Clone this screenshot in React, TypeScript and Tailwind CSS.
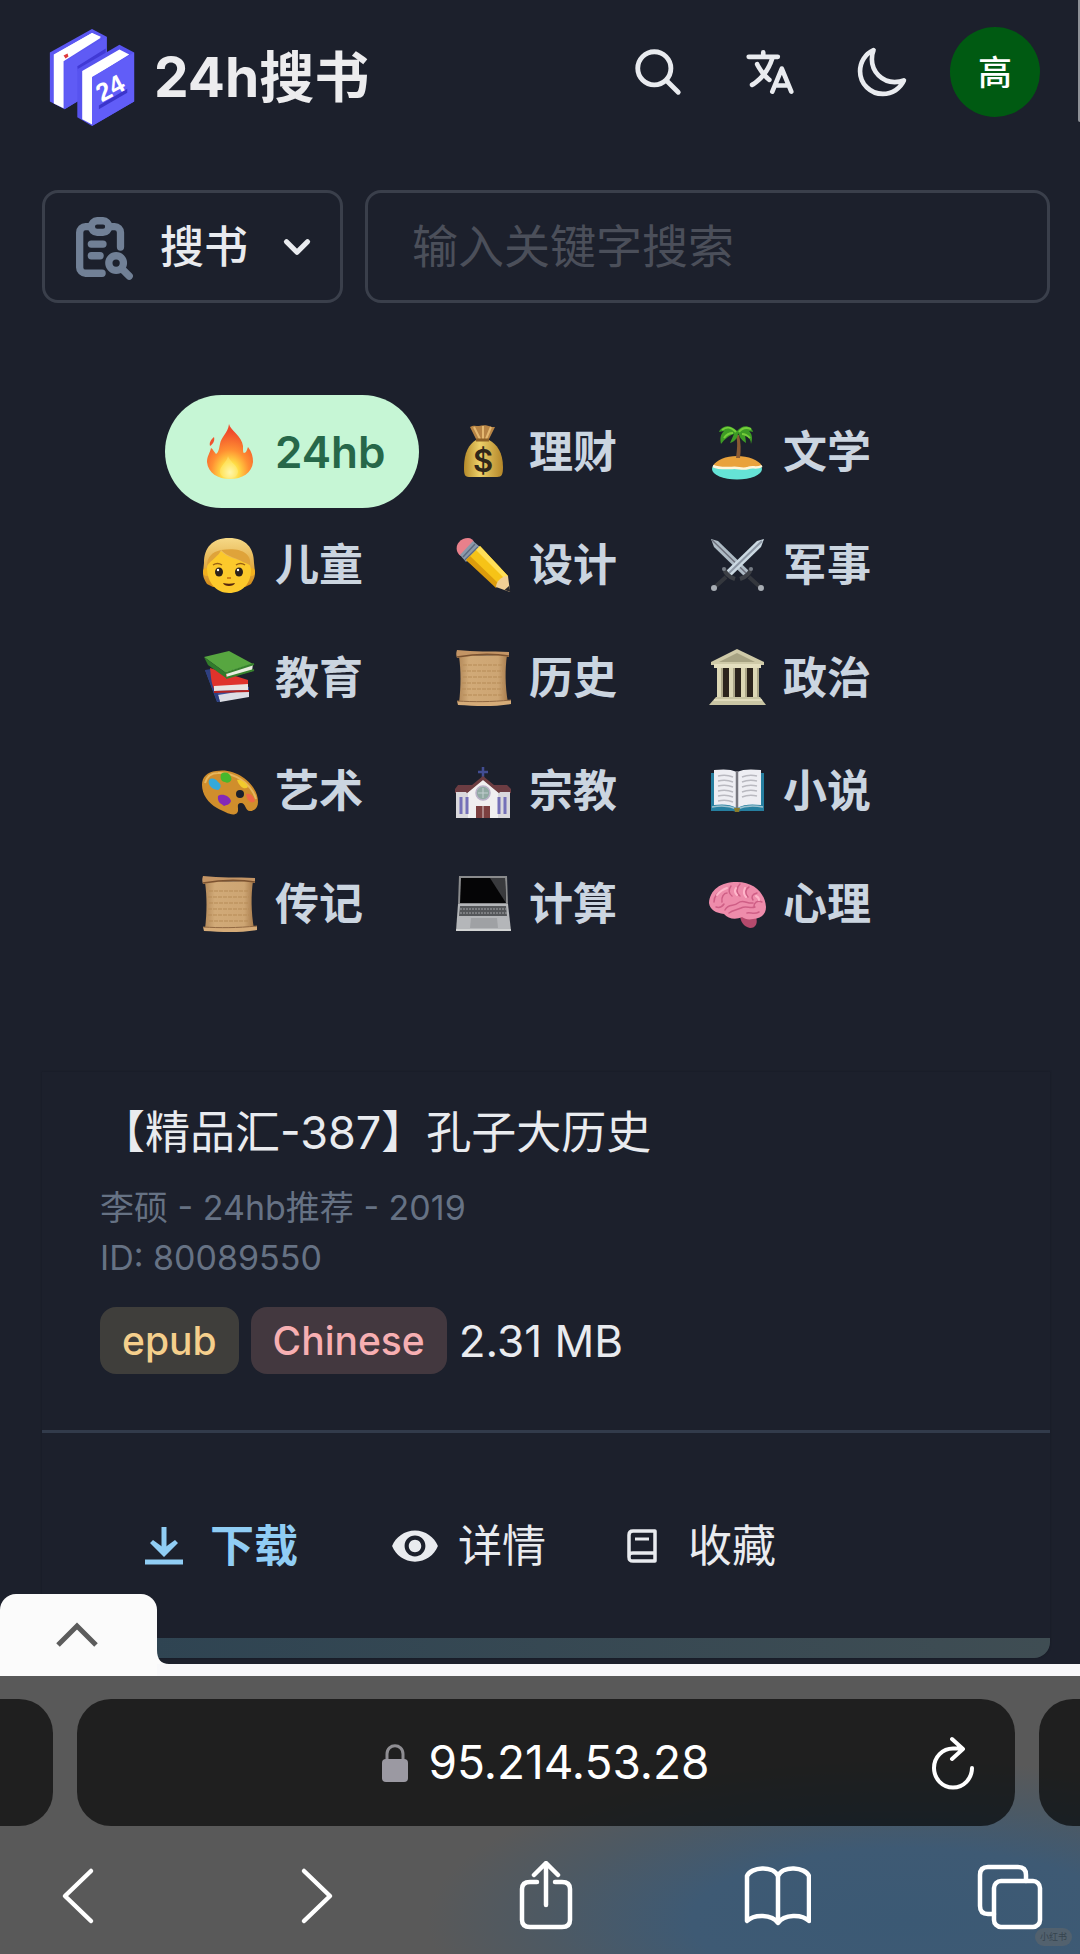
import React, { useState } from 'react';
import { IoLanguage, IoMoonOutline, IoSearchOutline } from 'react-icons/io5';
import { MdRemoveRedEye } from 'react-icons/md';
import { TbReportSearch } from 'react-icons/tb';
import { ChevronDown } from 'lucide-react';

interface Category {
  name: string;
  icon: React.ReactNode;
}

interface Book {
  title: string;
  meta: string;
  id: string;
  extension: string;
  language: string;
  size: string;
}

const Emoji = ({ children }: { children: React.ReactNode }) => (
  <svg viewBox="0 0 58 58" className="h-[58px] w-[58px] shrink-0" aria-hidden="true">
    {children}
  </svg>
);

const Fire = () => (
  <Emoji>
    <defs>
      <radialGradient id="fire" cx="0.5" cy="0.88" r="0.75">
        <stop offset="0" stopColor="#fffbc0" />
        <stop offset="0.25" stopColor="#ffdd45" />
        <stop offset="0.55" stopColor="#ff8f32" />
        <stop offset="1" stopColor="#ef4b2b" />
      </radialGradient>
    </defs>
    <path d="M28 1c1 6 13 12 14 22 0 4 0 7 1 7 2 0 3-3 4-6 4 5 5 10 5 15-1 11-11 17-23 17S7 50 6 39c0-6 3-9 4-14 2 1 3 4 5 6 3-2 3-6 4-10 1-7 8-11 9-20z" fill="url(#fire)" />
    <path d="M13 14c1 4-1 7-4 9-1-4 1-6 4-9z" fill="#f0522d" />
    <path d="M27 33c1 5 9 9 10 15 0 5-4 7-9 7s-9-2-9-7 7-9 8-15z" fill="#fff08a" opacity="0.4" />
  </Emoji>
);

const MoneyBag = () => (
  <Emoji>
    <defs>
      <linearGradient id="bag" x1="0" x2="1">
        <stop offset="0" stopColor="#b58a2a" />
        <stop offset="0.4" stopColor="#ecd069" />
        <stop offset="1" stopColor="#b48629" />
      </linearGradient>
    </defs>
    <path d="M15 4c3-2 6-1 9-1 4-1 8-1 13 1l3 0-7 14H22z" fill="#b78445" />
    <path d="M19 4l6 12M28 3v13M36 4l-5 12" stroke="#e4b870" strokeWidth="2" fill="none" />
    <path d="M21 17h13c8 4 14 13 14 27 0 7-1 10-6 10H14c-5 0-5-4-5-10 0-14 5-23 12-27z" fill="url(#bag)" />
    <path d="M21 17h13" stroke="#8d6026" strokeWidth="3" />
    <text x="28" y="49" textAnchor="middle" fontSize="31" fontWeight="600" fill="#30271a">$</text>
  </Emoji>
);

const Island = () => (
  <Emoji>
    <ellipse cx="28" cy="46" rx="25" ry="10.500" fill="#65e3d6" />
    <path d="M4 43c3-6 13-10 24-10s22 4 25 10c-6 3-9 0-14 2-6 2-10-1-16 0-6 0-12 1-19-2z" fill="#e9a23c" />
    <path d="M4 43c7 3 13 2 19 2 6-1 10 2 16 0 5-2 8 1 14-2" stroke="#fff5d8" strokeWidth="2.500" fill="none" />
    <path d="M30 12c2 8 2 15 1 23h-4c1-8 2-15 0-23z" fill="#8a5a33" />
    <path d="M28 8c-7-8-16-5-18 1l5-1c-4 4-4 8-3 13 4-5 7-8 13-10l-4 9c6-2 8-6 8-10 2 4 3 7 8 10l-1-9c4 3 6 6 6 10 2-6 1-10-2-13l4 1c-1-6-10-9-16-1z" fill="#3d9b25" />
    <path d="M13 7c5-4 9-3 14 2M30 9c3-4 7-5 12-3M15 15c2-3 5-5 9-5M33 11c3 0 6 2 8 4" stroke="#75cd3b" strokeWidth="2" fill="none" />
  </Emoji>
);

const Child = () => (
  <Emoji>
    <defs>
      <linearGradient id="hair" x1="0" x2="0" y1="0" y2="1">
        <stop offset="0" stopColor="#f6d987" />
        <stop offset="1" stopColor="#d38a15" />
      </linearGradient>
    </defs>
    <path d="M28 2c17 0 25 10 25 25l1 9c0 5-1 7-4 12l-6 3H12l-6-3c-3-5-4-7-4-12l1-9C3 12 11 2 28 2z" fill="url(#hair)" />
    <circle cx="6" cy="36" r="4" fill="#f2b01f" />
    <circle cx="50" cy="36" r="4" fill="#f2b01f" />
    <path d="M6 32c0-9 9-9 14-17 6 7 17 8 22 11 5 2 8 2 8 8 0 14-9 23-22 23S6 46 6 32z" fill="#fcc92b" />
    <path d="M20 14c6 7 17 8 22 12 3 1 5 2 7 3 2-12-10-18-29-15zM20 14c-2 6-10 10-14 16 0-9 5-14 14-16z" fill="#dfa33a" />
    <path d="M12 29c3-2 6-2 9 0M35 29c3-2 6-2 9 0" stroke="#9a6212" strokeWidth="1.500" fill="none" />
    <ellipse cx="18" cy="36" rx="4" ry="4.500" fill="#2c211a" />
    <ellipse cx="38" cy="36" rx="4" ry="4.500" fill="#2c211a" />
    <circle cx="17" cy="34" r="1.200" fill="#fff" />
    <circle cx="37" cy="34" r="1.200" fill="#fff" />
    <path d="M26 42h4" stroke="#d08515" strokeWidth="2" />
    <path d="M22 47c4 1 8 1 12 0-1 4-11 4-12 0z" fill="#54260e" />
  </Emoji>
);

const Pencil = () => (
  <Emoji>
    <path d="M2 15c-2-7 4-13 11-13 3 0 5 2 6 4L7 20c-2 0-4-2-5-5z" fill="#e8808b" />
    <path d="M18 5l7 6L11 26l-6-7z" fill="#8a99aa" />
    <path d="M20 8L8 21M23 11L10 24" stroke="#5d6b80" strokeWidth="1.500" />
    <path d="M25 10l28 30-10 10L11 24z" fill="#f6c317" />
    <path d="M25 10l28 30-4 2-28-28z" fill="#ffdf58" />
    <path d="M15 20l-4 4 30 28 3-4z" fill="#dc9c0c" />
    <path d="M53 40l2 16-14-5c0-5 5-11 12-11z" fill="#f0cf95" />
    <path d="M54 50l1.500 6-6-2z" fill="#2c2a2d" />
  </Emoji>
);

const Swords = () => (
  <Emoji>
    <path d="M2 3l7 2 32 31-5 5L5 11z" fill="#aebbc5" />
    <path d="M3 4l35 34" stroke="#6d6f7b" strokeWidth="1.500" />
    <path d="M55 3l-7 2-32 31 5 5 31-30z" fill="#cbd9e2" />
    <path d="M53 5L19 38" stroke="#8d97a5" strokeWidth="2" />
    <path d="M42 32c-1 5-5 9-11 11M15 32c1 5 5 9 11 11" stroke="#3d4046" strokeWidth="4" fill="none" />
    <path d="M40 41l11 10M17 41L6 51" stroke="#34373d" strokeWidth="4" />
    <circle cx="52" cy="52" r="3" fill="#a8adb4" />
    <circle cx="5" cy="52" r="3" fill="#a8adb4" />
    <circle cx="42" cy="33" r="2" fill="#777d86" />
    <circle cx="15" cy="33" r="2" fill="#777d86" />
  </Emoji>
);

const Books = () => (
  <Emoji>
    <path d="M4 21l6 2 38 15v9l-32 6z" fill="#39509b" />
    <path d="M17 46l31-5v7l-29 5z" fill="#dcdde4" />
    <path d="M4 21l12 31 3 1L10 20z" fill="#2e3f80" />
    <path d="M9 19l38 12v6l-34 3c-3-7-3-13-4-21z" fill="#df332c" />
    <path d="M13 37l34-2v6l-34 1z" fill="#e8e4e2" />
    <path d="M3 8L28 2l24 13-27 9z" fill="#57a640" />
    <path d="M3 8l22 16v5L7 16z" fill="#317a2b" />
    <path d="M25 23l27-8-1 7-25 7z" fill="#e8eddf" />
    <path d="M25 29l28-8M25 24l28-9" stroke="#36812d" strokeWidth="2" />
    <path d="M13 43l35-1" stroke="#b5221f" strokeWidth="2" />
  </Emoji>
);

const Scroll = () => (
  <Emoji>
    <defs>
      <linearGradient id="paper" x1="0" x2="1">
        <stop offset="0" stopColor="#b48a5a" />
        <stop offset="0.2" stopColor="#d1aa78" />
        <stop offset="0.8" stopColor="#cda573" />
        <stop offset="1" stopColor="#a67a4b" />
      </linearGradient>
    </defs>
    <path d="M4 7l48-1c-2 14-2 30 1 48H4c2-17 2-32 0-47z" fill="url(#paper)" />
    <path d="M8 16h40M7 22h41M8 28h40M7 34h41M7 40h41M8 46h40" stroke="#b68b57" strokeWidth="1" strokeDasharray="4 1" />
    <path d="M2 1c17 2 34 1 52 2v5C37 5 19 6 2 9c-1-3-1-5 0-8z" fill="#c49565" />
    <path d="M2 8c17-3 34-4 52-1" stroke="#7b5331" strokeWidth="1.500" fill="none" />
    <path d="M2 52c17 1 34 1 54-1v4c-18 3-36 2-53 1z" fill="#d5ab78" />
    <path d="M2 52c17 1 34 1 54-1" stroke="#916842" strokeWidth="1" fill="none" />
  </Emoji>
);

const Temple = () => (
  <Emoji>
    <path d="M10 18h38v32H10z" fill="#2c241d" />
    <path d="M28 0l27 13v3H2v-3z" fill="#cfcaa8" />
    <path d="M28 4l18 9H10z" fill="#a7a383" />
    <path d="M5 15h47v4H5z" fill="#e4dfbf" />
    <path d="M8 19h6v30H8zM20 19h6v30h-6zM32 19h6v30h-6zM44 19h6v30h-6z" fill="#dcd7b5" />
    <path d="M13 19v30M25 19v30M37 19v30M49 19v30" stroke="#9d987b" strokeWidth="1.500" />
    <path d="M7 48h44l6 8H0z" fill="#c9c5a4" />
    <path d="M5 51h48" stroke="#e7e2c4" strokeWidth="1.500" />
  </Emoji>
);

const Palette = () => (
  <Emoji>
    <path d="M15 9C35 5 57 22 57 40c0 6-4 9-8 9-5 0-4-8-9-8-6 0-1 7-4 10-4 4-12-1-20-5C7 41 1 32 1 23 1 15 6 10 15 9z" fill="#d08e2c" />
    <path d="M4 21c2-7 6-10 13-10 16-1 33 10 38 26" stroke="#e7b65d" strokeWidth="2" fill="none" />
    <ellipse cx="39" cy="32" rx="4" ry="4" fill="#1c202c" />
    <path d="M8 18c3-3 7-1 9 2 4 2 3 7 0 8-4 0-11-4-9-10z" fill="#35a9d9" />
    <path d="M20 12c4-3 9-1 10 3 2 4-3 7-6 5-4 0-5-4-4-8z" fill="#46b82d" />
    <path d="M36 18c3-1 9 2 11 7-3 3-8 1-11-7z" fill="#f2cb2c" />
    <path d="M45 32c5-1 8 3 9 7-3 3-8 1-9-7z" fill="#ee6745" />
    <path d="M17 34c4-3 12 0 13 5-1 4-5 4-7 5-2-2-7-3-6-10z" fill="#8428b6" />
  </Emoji>
);

const Church = () => (
  <Emoji>
    <path d="M28 5v14M23 10h10" stroke="#424d93" strokeWidth="2.500" />
    <path d="M0 27l3-4h49l4 4v4H0z" fill="#6c3c42" />
    <path d="M1 30h54v26H1z" fill="#d9d8dc" />
    <path d="M28 17l15 13v26H13V30z" fill="#f0eff0" />
    <path d="M11 30l17-14 17 14" stroke="#6d3d41" strokeWidth="3" fill="none" />
    <circle cx="28" cy="31" r="7" fill="#91aaa3" stroke="#b9b1c8" strokeWidth="1.500" />
    <path d="M23 31h10M28 26v10" stroke="#c2ced0" strokeWidth="1" />
    <path d="M21 44h14v12H21z" fill="#7c4040" />
    <path d="M28 44v12" stroke="#d9c8c8" strokeWidth="1" />
    <path d="M6 35v17M12 35v17M44 35v17M50 35v17" stroke="#7470b8" strokeWidth="3" />
  </Emoji>
);

const OpenBook = () => (
  <Emoji>
    <path d="M2 11h53v38H32l-4 1-4-1H2z" fill="#267fa0" />
    <path d="M28 46c-7-4-15-4-23-3V8c9-1 17-1 23 2 6-3 14-3 24-2v35c-9-1-17-1-24 3z" fill="#eeeef3" />
    <path d="M28 9v37" stroke="#77777f" strokeWidth="2.500" />
    <path d="M9 14c5-1 10-1 15 1M9 19c5-1 10-1 15 1M9 24c5-1 10-1 15 1M9 29c5-1 10-1 15 1M9 34c5-1 10-1 15 1M9 39c5-1 10-1 15 1M33 15c5-2 10-2 15-1M33 20c5-2 10-2 15-1M33 25c5-2 10-2 15-1M33 30c5-2 10-2 15-1M33 35c5-2 10-2 15-1" stroke="#b9b9c0" strokeWidth="1.500" fill="none" />
    <path d="M3 45c9-2 18-1 25 2 7-3 15-4 26-2" stroke="#9cc1ce" strokeWidth="1.500" fill="none" />
    <path d="M25 46h6l-1 4h-4z" fill="#8a7b29" />
  </Emoji>
);

const Laptop = () => (
  <Emoji>
    <path d="M4 1h48l1 29H3z" fill="#8a8b8d" />
    <path d="M6 3h44l1 25H5z" fill="#050506" />
    <path d="M35 3h15l1 25z" fill="#393a3d" />
    <path d="M3 29h50l3 27H1z" fill="#b4b6b9" />
    <path d="M5 31h46l1 10H4z" fill="#55575a" />
    <path d="M5 34h46M5 38h47" stroke="#a3a5a7" strokeWidth="1" strokeDasharray="2 1" />
    <path d="M16 43h26l1 10H15z" fill="#9fa1a4" />
    <path d="M1 55h55" stroke="#dbdcdd" strokeWidth="1.500" />
  </Emoji>
);

const Brain = () => (
  <Emoji>
    <path d="M31 41c1 6 3 10 10 12 6 0 8-5 6-11z" fill="#b54a6d" />
    <path d="M0 28C1 15 11 7 28 7c17 0 28 11 29 25 0 7-5 12-13 12-5 1-8 0-11-2-6 3-14 2-18-3C7 38 1 35 0 28z" fill="#ee8cab" />
    <path d="M5 27c0-6 4-10 9-12M13 27c-1-5 2-9 5-9M22 11c-3 4-2 8 1 10M31 9c-4 4-4 9 0 12M40 12c-4 2-4 7-1 10M48 18c-5 1-6 4-4 7M53 27c-5-2-8 1-8 4M16 35c3-7 9-3 13-7 5-4 9 1 15 0M20 38c4-3 8-3 12-5 5-3 9 1 14-1M7 32c3 1 6 0 8-3M38 38c4-1 7 2 12-1" stroke="#cf5f86" strokeWidth="1.500" fill="none" strokeLinecap="round" />
    <path d="M8 20c3-4 7-6 10-7M27 13c-2 3-1 5 1 7M36 13c-2 4-1 7 1 9M47 21c2 1 3 3 3 4" stroke="#ffb6ca" strokeWidth="2" fill="none" strokeLinecap="round" />
  </Emoji>
);

const categories: Category[] = [
  { name: '24hb', icon: <Fire /> },
  { name: '理财', icon: <MoneyBag /> },
  { name: '文学', icon: <Island /> },
  { name: '儿童', icon: <Child /> },
  { name: '设计', icon: <Pencil /> },
  { name: '军事', icon: <Swords /> },
  { name: '教育', icon: <Books /> },
  { name: '历史', icon: <Scroll /> },
  { name: '政治', icon: <Temple /> },
  { name: '艺术', icon: <Palette /> },
  { name: '宗教', icon: <Church /> },
  { name: '小说', icon: <OpenBook /> },
  { name: '传记', icon: <Scroll /> },
  { name: '计算', icon: <Laptop /> },
  { name: '心理', icon: <Brain /> },
];

const book: Book = {
  title: '【精品汇-387】孔子大历史',
  meta: '李硕 - 24hb推荐 - 2019',
  id: '80089550',
  extension: 'epub',
  language: 'Chinese',
  size: '2.31 MB',
};

const Logo = () => (
  <svg viewBox="0 0 88 100" className="h-[98px] w-[88px]" aria-hidden="true">
    {/* Back book */}
    <path d="M1 25L44 1l15 8v48L16 83 1 75z" fill="#5b57f2" />
    <path d="M5 27L44 5l9 5-38 24v48L5 77z" fill="#fff" />
    <path d="M16 34L59 9v48L16 83z" fill="#5f5bf5" />
    <path d="M15 31l38-22-9-4L6 27z" fill="#fff" />
    <path d="M29 39l29-18v9L30 47z" fill="#4039d5" />
    <path d="M15 28l4-2 1 3-3 2z" fill="#e03a3a" />
    {/* Front book */}
    <path d="M29 42l43-25 15 8v50l-43 25-15-9z" fill="#5753ef" />
    <path d="M34 44l38-22 10 5-37 23v49l-11-6z" fill="#fff" />
    <path d="M44 50l43-25v50l-43 25z" fill="#615df8" />
    <path d="M51 79l29-17v4L51 83z" fill="#3b35cc" />
    <text x="54" y="76" transform="rotate(-28 54 76)" fontSize="26" fontWeight="700" fill="#fff" fontFamily="Liberation Sans, sans-serif">
      24
    </text>
  </svg>
);

const DownloadIcon = () => (
  <svg viewBox="0 0 40 40" className="h-10 w-10" fill="none" stroke="currentColor" aria-hidden="true">
    <path d="M20 1v24" strokeWidth="5" />
    <path d="M6 17l3-3 11 8 11-8 3 3-14 14z" fill="currentColor" stroke="none" />
    <path d="M1 36h38" strokeWidth="5" />
  </svg>
);

const BookIcon = () => (
  <svg viewBox="0 0 32 36" className="h-9 w-8" fill="none" stroke="currentColor" strokeWidth="3.500" aria-hidden="true">
    <path d="M29 25V3H7C4 3 3 5 3 7v22c0 3 1 4 4 4h22v-8H7c-3 0-4 1-4 4" strokeLinejoin="round" />
    <path d="M9 11h14" strokeWidth="3" />
  </svg>
);

const Header = () => (
  <header className="flex items-start justify-between pt-7 pr-10 pl-12">
    <a href="#home" className="flex items-center gap-[18px]">
      <Logo />
      <h1 className="text-[55px] leading-[64px] font-bold text-[#ececee]">24h搜书</h1>
    </a>
    <div className="flex h-[88px] items-center">
      <button aria-label="搜索" className="flex w-28 justify-center">
        <IoSearchOutline className="h-[54px] w-[54px] [&_path]:[stroke-width:46px]" />
      </button>
      <button aria-label="语言" className="flex w-28 justify-center">
        <IoLanguage className="h-[54px] w-[54px]" />
      </button>
      <button aria-label="深色模式" className="flex w-28 justify-center">
        <IoMoonOutline className="h-[54px] w-[54px] [&_path]:[stroke-width:44px]" />
      </button>
      <button className="ml-3 h-[90px] w-[90px] rounded-full bg-[#005a12] text-[34px] font-medium text-white">高</button>
    </div>
  </header>
);

const SearchBar = () => {
  const [keyword, setKeyword] = useState('');

  return (
    <form className="mt-16 flex h-[113px] gap-[22px]" onSubmit={(e) => e.preventDefault()}>
      <button
        type="button"
        className="flex w-[301px] shrink-0 items-center rounded-2xl border-[3px] border-[#3a3f4b] pl-[23px]"
      >
        <TbReportSearch className="h-[70px] w-[70px] text-[#718096] [&_path]:[stroke-width:2.5px]" />
        <span className="ml-[22px] text-[44px] font-medium">搜书</span>
        <ChevronDown className="mr-[22px] ml-auto h-[42px] w-[42px]" strokeWidth={3} />
      </button>
      <input
        type="text"
        aria-label="输入关键字搜索"
        placeholder="输入关键字搜索"
        value={keyword}
        onChange={(e) => setKeyword(e.target.value)}
        className="min-w-0 flex-1 rounded-2xl border-[3px] border-[#3a3f4b] bg-transparent px-11 text-[46px] outline-none placeholder:text-[#4b4f5a]"
      />
    </form>
  );
};

const CategoryGrid = () => {
  const [active, setActive] = useState('24hb');

  return (
    <nav className="mx-auto mt-[92px] grid w-fit grid-cols-3">
      {categories.map(({ name, icon }) => (
        <button
          key={name}
          onClick={() => setActive(name)}
          className={`flex h-[113px] w-[254px] items-center gap-4 rounded-full pl-9 text-[44px] font-semibold ${
            active === name ? 'bg-[#c6f6d5] text-[#276749]' : 'text-[#cbd5e0]'
          }`}
        >
          {icon}
          {name}
        </button>
      ))}
    </nav>
  );
};

const BookCard = ({ book }: { book: Book }) => (
  <article className="mt-28 overflow-hidden rounded-b-2xl shadow-[0_0_2px_#141822]">
    <div className="border-b-[3px] border-[#323b4b] px-[58px] pt-[31px] pb-14">
      <h2 className="text-[45px] leading-[60px]">{book.title}</h2>
      <div className="mt-5 text-[34px] leading-[50px] text-[#667284]">
        <p>{book.meta}</p>
        <p>ID: {book.id}</p>
      </div>
      <div className="mt-6 flex h-[67px] items-center">
        <span className="mr-3 rounded-2xl bg-[#3f3e3b] px-[22px] text-[39px] leading-[67px] font-medium text-[#f5cf8c]">
          {book.extension}
        </span>
        <span className="mr-3 rounded-2xl bg-[#43383f] px-[22px] text-[39px] leading-[67px] font-medium text-[#f7afb2]">
          {book.language}
        </span>
        <span className="text-[44px]">{book.size}</span>
      </div>
    </div>
    <div className="flex h-[205px] items-center pt-5 pl-[102px] text-[44px]">
      <a href="#download" className="flex items-center gap-[26px] font-semibold text-[#90cdf4]">
        <DownloadIcon />
        下载
      </a>
      <button className="ml-[92px] flex items-center gap-[18px]">
        <MdRemoveRedEye className="h-[50px] w-[50px]" />
        详情
      </button>
      <button className="ml-20 flex items-center gap-[30px]">
        <BookIcon />
        收藏
      </button>
    </div>
    <div className="h-5 bg-gradient-to-r from-[#2d4352] to-[#3f4d53]" />
  </article>
);

const Tray = () => (
  <div className="relative mt-[6px] h-3 bg-[#f8f8fa]">
    <button
      aria-label="展开"
      className="absolute bottom-0 left-0 flex h-[82px] w-[157px] items-center justify-center rounded-t-2xl bg-[#fbfbfb] text-[#5c5c5c]"
    >
      <svg viewBox="0 0 44 28" className="mr-1 h-7 w-11" fill="none" stroke="currentColor" strokeWidth="5" aria-hidden="true">
        <path d="M3 24L22 5l19 19" />
      </svg>
    </button>
    <svg viewBox="0 0 12 14" className="absolute bottom-3 left-[157px] h-[14px] w-3" aria-hidden="true">
      <path d="M0 0c0 9 4 14 12 14H0z" fill="#fbfbfb" />
    </svg>
  </div>
);

const ToolButton = ({ label, children }: { label: string; children: React.ReactNode }) => (
  <button aria-label={label}>
    <svg
      viewBox="0 0 68 70"
      className="h-[70px] w-[68px]"
      fill="none"
      stroke="currentColor"
      strokeWidth="4.500"
      strokeLinecap="round"
      strokeLinejoin="round"
      aria-hidden="true"
    >
      {children}
    </svg>
  </button>
);

const BrowserBar = () => (
  <footer className="flex-1 bg-[#595959] bg-[radial-gradient(ellipse_480px_160px_at_84%_88%,#3b5974_0%,#3e5a74_45%,#4d5963_75%,transparent_100%)] text-white">
    <div className="flex h-[150px] gap-6 pt-[23px]">
      <div className="w-[53px] rounded-r-[34px] bg-black/65" />
      <div className="grid flex-1 grid-cols-[1fr_auto_1fr] items-center rounded-[34px] bg-black/65">
        <span />
        <button className="flex items-center gap-5 text-[46px]">
          <svg viewBox="0 0 26 38" className="h-[38px] w-[26px]" aria-hidden="true">
            <path d="M5 18V10c0-11 16-11 16 0v8" fill="none" stroke="#8f8e93" strokeWidth="3" />
            <rect y="15" width="26" height="23" rx="4" fill="#9b99a2" />
          </svg>
          95.214.53.28
        </button>
        <button aria-label="刷新" className="mr-10 justify-self-end">
          <svg
            viewBox="0 0 44 54"
            className="h-[54px] w-11"
            fill="none"
            stroke="currentColor"
            strokeWidth="4"
            strokeLinecap="round"
            strokeLinejoin="round"
            aria-hidden="true"
          >
            <path d="M41 32a19 19.500 0 1 1-19-19.500h9M21 3l11 10-11 10" />
          </svg>
        </button>
      </div>
      <div className="w-[41px] rounded-l-[34px] bg-black/65" />
    </div>
    <div className="relative flex h-32 items-center justify-between pt-3 pr-9 pl-11">
      <ToolButton label="后退">
        <path d="M47 10L21 35l26 25" />
      </ToolButton>
      <ToolButton label="前进">
        <path d="M27 10l26 25-26 25" />
      </ToolButton>
      <ToolButton label="分享">
        <path d="M27 21h-7c-5 0-8 2-8 7v31c0 5 3 7 8 7h32c5 0 8-2 8-7V28c0-5-3-7-8-7h-7M36 44V3M24 14L36 2l12 12" />
      </ToolButton>
      <ToolButton label="书签">
        <path d="M35 62c-6-9-24-9-31-2V15C8 6 30 4 35 15c5-11 27-9 31 0v45c-7-7-25-7-31 2zM35 15v45" />
      </ToolButton>
      <ToolButton label="标签页">
        <path d="M18 53h-6c-6 0-8-3-8-8V14c0-6 3-8 8-8h30c6 0 8 3 8 8v6" />
        <rect x="18" y="20" width="46" height="46" rx="7" />
      </ToolButton>
      <span className="absolute right-2 bottom-2 rounded-full bg-[#52616e] px-[5px] text-[9px] leading-[18px] text-[#36444f]">小红书</span>
    </div>
  </footer>
);

const App = () => {
  return (
    <div className="relative flex min-h-screen flex-col bg-[#1c202c] font-['Inter','Noto_Sans_CJK_SC',sans-serif] text-[#e9ebef]">
      <Header />
      <main className="pr-[30px] pl-[42px]">
        <SearchBar />
        <CategoryGrid />
        <BookCard book={book} />
      </main>
      <Tray />
      <BrowserBar />
      {/* Scroll thumb */}
      <div className="absolute top-0 right-0 h-[122px] w-[2px] rounded-bl-full bg-[#8e9197]" />
    </div>
  );
};

export default App;
